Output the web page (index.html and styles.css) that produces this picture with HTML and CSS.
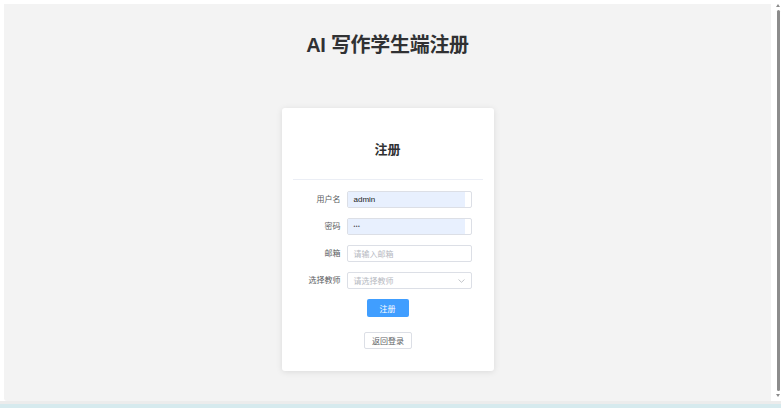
FILE: index.html
```html
<!DOCTYPE html>
<html lang="zh-CN">
<head>
  <meta charset="UTF-8">
  <title>AI 写作学生端注册</title>
  <link rel="stylesheet" href="styles.css">
</head>
<body>
  <div class="screen">
    <div class="view">
      <div class="page">
        <h1 class="page-title">AI 写作学生端注册</h1>

        <div class="card">
          <div class="card-header">注册</div>
          <div class="card-line"></div>

          <div class="form">
            <label class="form-label">用户名</label>
            <div class="input filled"><span class="fill">admin</span></div>

            <label class="form-label">密码</label>
            <div class="input filled"><span class="fill dots">●●●</span></div>

            <label class="form-label">邮箱</label>
            <div class="input"><span class="placeholder">请输入邮箱</span></div>

            <label class="form-label">选择教师</label>
            <div class="input select">
              <span class="placeholder">请选择教师</span>
              <svg class="arrow" width="7" height="4" viewBox="0 0 7 4">
                <path d="M0.5 0.5 L3.5 3.3 L6.5 0.5" fill="none" stroke="#b4b7bd" stroke-width="0.8"/>
              </svg>
            </div>
          </div>

          <div class="actions">
            <button class="btn btn-primary">注册</button>
            <button class="btn btn-plain">返回登录</button>
          </div>
        </div>
      </div>

      <div class="scrollbar">
        <div class="scroll-arrow up"></div>
        <div class="scroll-thumb"></div>
        <div class="scroll-arrow down"></div>
      </div>
    </div>
    <div class="bottom-line"></div>
    <div class="taskbar"></div>
  </div>
</body>
</html>
```

FILE: styles.css
```css
html, body {
  margin: 0;
  padding: 0;
  background-color: #fff;
  font-family: "Liberation Sans", "Noto Sans CJK SC", sans-serif;
}

.screen {
  width: 781px;
  height: 408px;
  display: flex;
  flex-direction: column;
  overflow: hidden;
}

.view {
  display: flex;
  height: 401px;
  padding: 4px 0 0 4px;
  box-sizing: border-box;
}

.page {
  width: 767px;
  background-color: #f3f3f3;
  border-bottom-left-radius: 3px;
  display: flex;
  flex-direction: column;
  align-items: center;
}

.page-title {
  margin: 31px 0 0;
  font-size: 20px;
  line-height: 20px;
  font-weight: bold;
  letter-spacing: -0.3px;
  color: #303133;
}

.card {
  margin-top: 53px;
  width: 212px;
  background-color: #fff;
  border-radius: 3px;
  box-shadow: 0 1px 6px rgba(0, 0, 0, 0.1);
  padding: 0 11px 22px;
  box-sizing: border-box;
}

.card-header {
  margin-top: 34px;
  text-align: center;
  font-size: 13px;
  line-height: 16px;
  font-weight: bold;
  color: #303133;
}

.card-line {
  margin-top: 21px;
  height: 1px;
  background-color: #ebeef5;
}

.form {
  margin-top: 11px;
  display: grid;
  grid-template-columns: 54px 125px;
  row-gap: 10px;
}

.form-label {
  font-size: 8px;
  line-height: 17px;
  color: #5a5c61;
  text-align: right;
  padding-right: 6px;
}

.input {
  height: 17px;
  border: 1px solid #dcdfe6;
  border-radius: 2px;
  box-sizing: border-box;
  display: flex;
  align-items: center;
  padding-left: 6px;
  font-size: 8px;
  color: #303133;
  position: relative;
}

.input.filled {
  padding: 0 6px 0 0;
}

.fill {
  flex: 1;
  align-self: stretch;
  background-color: #e8f0fe;
  padding-left: 6px;
  line-height: 15px;
  color: #222;
}

.dots {
  font-size: 3px;
  letter-spacing: 0.5px;
}

.placeholder {
  color: #b6b9bf;
}

.select .arrow {
  position: absolute;
  right: 6px;
  top: 6px;
}

.actions {
  display: flex;
  flex-direction: column;
  align-items: center;
  margin-top: 10px;
  gap: 15px;
}

.btn {
  font-family: inherit;
  font-size: 8px;
  border-radius: 2px;
  cursor: pointer;
  padding: 0;
}

.btn-primary {
  width: 42px;
  height: 18px;
  border: none;
  background-color: #409eff;
  color: #fff;
}

.btn-plain {
  width: 48px;
  height: 17px;
  margin-left: 1px;
  border: 1px solid #dcdfe6;
  background-color: #fff;
  color: #606266;
}

.scrollbar {
  width: 10px;
  margin-top: -4px;
  display: flex;
  flex-direction: column;
  align-items: flex-end;
  padding: 4px 1px 4px 0;
  box-sizing: border-box;
}

.scroll-thumb {
  flex: 1;
  width: 3px;
  margin: 3px 0;
  background-color: #8c8c8c;
  border-radius: 2px;
}

.scroll-arrow {
  width: 0;
  height: 0;
  border-left: 2px solid transparent;
  border-right: 2px solid transparent;
}

.scroll-arrow.up {
  border-bottom: 3px solid #8c8c8c;
}

.scroll-arrow.down {
  border-top: 3px solid #8c8c8c;
}

.bottom-line {
  height: 3px;
  background-color: #ececec;
}

.taskbar {
  flex: 1;
  background-color: #d6eaee;
}
```
